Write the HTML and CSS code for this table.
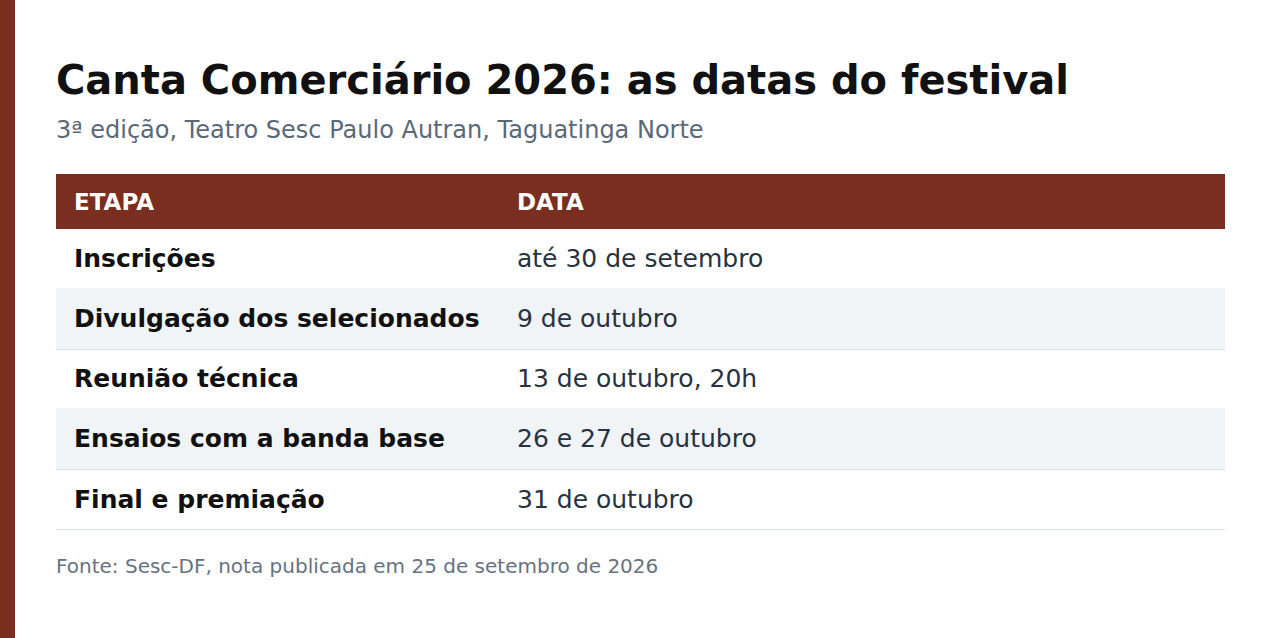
FILE: index.html
```html
<!DOCTYPE html>
<html lang="pt-BR">
<head>
<meta charset="utf-8">
<link rel="stylesheet" href="styles.css">
</head>
<body>
<div class="page">
  <div class="accent"></div>
  <main class="content">
    <h1 class="title">Canta Comerciário 2026: as datas do festival</h1>
    <p class="subtitle">3ª edição, Teatro Sesc Paulo Autran, Taguatinga Norte</p>
    <table class="schedule">
      <thead>
        <tr><th class="col-stage">Etapa</th><th>Data</th></tr>
      </thead>
      <tbody>
        <tr><td class="stage">Inscrições</td><td class="date">até 30 de setembro</td></tr>
        <tr class="alt"><td class="stage">Divulgação dos selecionados</td><td class="date">9 de outubro</td></tr>
        <tr><td class="stage">Reunião técnica</td><td class="date">13 de outubro, 20h</td></tr>
        <tr class="alt"><td class="stage">Ensaios com a banda base</td><td class="date">26 e 27 de outubro</td></tr>
        <tr class="last"><td class="stage">Final e premiação</td><td class="date">31 de outubro</td></tr>
      </tbody>
    </table>
    <p class="source">Fonte: Sesc-DF, nota publicada em 25 de setembro de 2026</p>
  </main>
</div>
</body>
</html>
```
FILE: styles.css
```css
* { box-sizing: border-box; }
html, body { margin: 0; padding: 0; background: #fff; }
body { font-family: "DejaVu Sans", sans-serif; }
.page { display: flex; min-height: 638px; }
.accent { width: 15px; flex: 0 0 15px; background: #7a2e20; }
.content { flex: 1; padding: 56px 40px 0 41px; }
.title { margin: 0; font-size: 40px; font-weight: bold; color: #111; line-height: 48px; }
.subtitle { margin: 10px 0 0; font-size: 24px; color: #5b6878; line-height: 32px; }
.schedule { margin-top: 28px; width: 1169px; border-collapse: collapse; table-layout: fixed; }
.schedule th { background: #7a2e20; color: #fff; text-align: left; font-size: 23px; font-weight: bold; text-transform: uppercase; height: 55px; padding: 0 18px; }
.col-stage { width: 443px; }
.schedule td { height: 59px; padding: 0 18px; font-size: 25px; white-space: nowrap; }
.schedule tr.alt td { background: #f0f4f7; height: 61px; border-bottom: 1px solid #d9e0e7; }
.schedule tr.last td { height: 60px; border-bottom: 1px solid #d9e0e7; }
.stage { font-weight: bold; color: #111; }
.date { color: #283240; }
.source { margin: 22px 0 0; font-size: 20px; color: #687280; line-height: 28px; }
```
